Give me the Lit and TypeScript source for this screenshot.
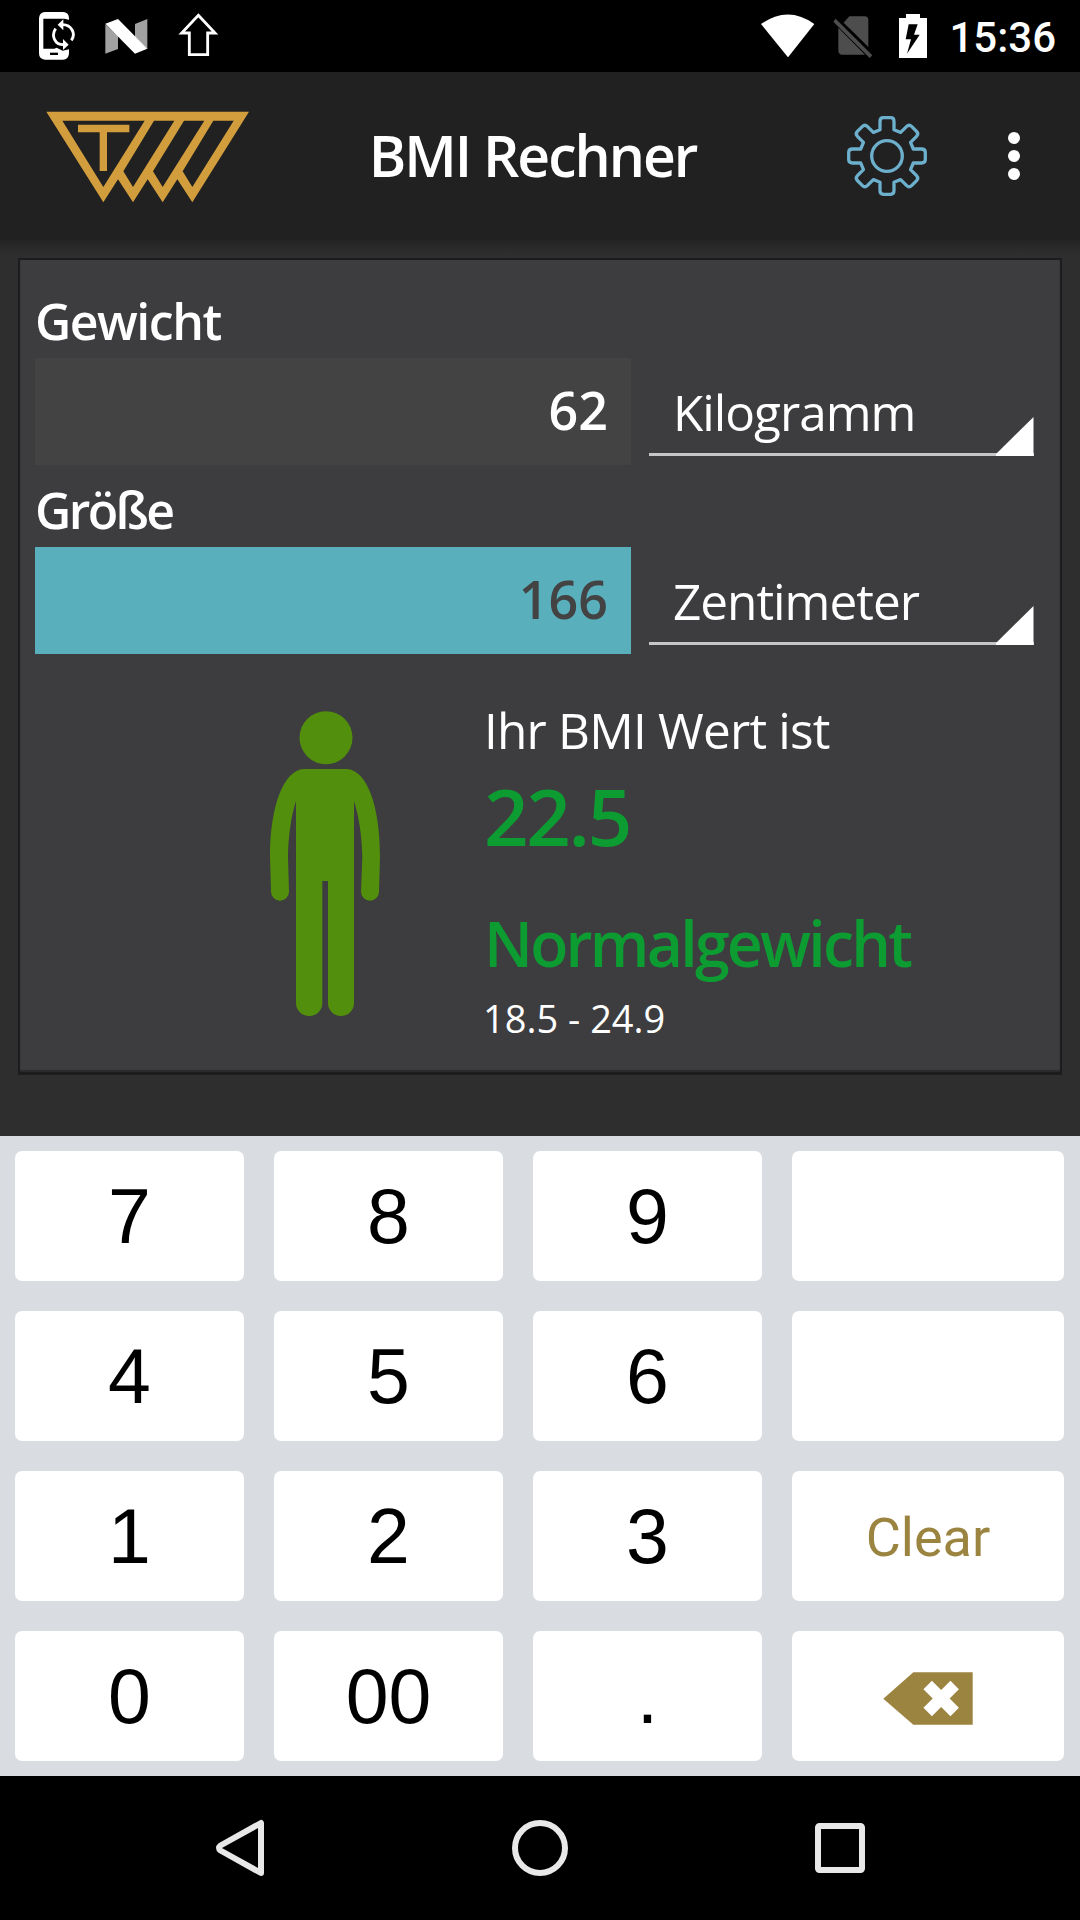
import { LitElement, html, css, svg, nothing } from "lit";
import { customElement, property } from "lit/decorators.js";

/** Outline of a gear with eight rounded teeth, centred on the origin. */
function gearPath(): string {
  const parts: string[] = [];
  for (let i = 0; i < 8; i++) {
    const a = (i * Math.PI) / 4;
    const p = (x: number, y: number) =>
      `${(x * Math.cos(a) - y * Math.sin(a)).toFixed(2)} ${(x * Math.sin(a) + y * Math.cos(a)).toFixed(2)}`;
    parts.push(
      `${i ? "L" : "M"}${p(-7, -26.3)}L${p(-7, -34.5)}Q${p(-7, -38.3)} ${p(-3.6, -38.3)}` +
        `L${p(3.6, -38.3)}Q${p(7, -38.3)} ${p(7, -34.5)}L${p(7, -26.3)}`,
    );
  }
  return parts.join("") + "Z";
}

@customElement("status-bar")
class StatusBar extends LitElement {
  static styles = css`
    :host { display: flex; justify-content: space-between; align-items: flex-start; height: 72px; background: #000; color: #fff; }
    svg { display: block; }
    .group { display: flex; align-items: flex-start; }
    .left { padding-left: 39px; }
    .right { padding-right: 24px; }
    .sync { margin: 12px 30px 0 0; }
    .nougat { margin: 18.5px 30px 0 0; }
    .upload { margin-top: 13px; }
    .wifi { margin: 13.5px 18px 0 0; }
    .sim { margin: 16px 26.5px 0 0; }
    .battery { margin: 14px 22px 0 0; }
    .time { font: 500 42px/72px Roboto, sans-serif; margin-top: 2px; }
  `;
  render() {
    return html`
      <div class="group left">
        <svg class="sync" width="36" height="48" viewBox="117 36 108 144">
          <path fill="#fff" d="M135 36H189Q207 37 207 55V59L193 56H130V146H163L170 143L188 152L207 148V160Q206 179 189 179H135Q117 178 117 160V55Q118 37 135 36Z" />
          <path fill="#000" d="M150 158H174V165H150Z" />
          <path fill="none" stroke="#fff" stroke-width="8.5" d="M188 74C214 74 229 101 214 121M190 134C165 134 152 107 167 86" />
          <path fill="#fff" d="M190 58V91L173 74ZM189 117V150L206 134Z" />
        </svg>
        <svg class="nougat" width="43" height="35" viewBox="314 56 129 105">
          <path fill="#a2a2a2" d="M315 72L353 108V146L315 160ZM404 71L441 56V146L404 110Z" />
          <path fill="#fff" d="M315 70L353 56L441 145L404 160Z" />
        </svg>
        <svg class="upload" width="41" height="44" viewBox="533 39 123 132">
          <path fill="none" stroke="#fff" stroke-width="8.500" d="M594 46L644 99H622V164H567V99H544Z" />
        </svg>
      </div>
      <div class="group right">
        <svg class="wifi" width="53.5" height="43.5" viewBox="122 41 160.5 130.5">
          <path fill="#fff" d="M122 71Q203 14 282 71L203 171Z" />
        </svg>
        <svg class="sim" width="40" height="43" viewBox="337 48 120 129">
          <path fill="#4d4d4d" d="M386 49H432Q443 50 443 60V141L369 68ZM353 83L433 164H365Q353 163 353 152ZM345 56L455 166L447 174L338 65Z" />
        </svg>
        <svg class="battery" width="28" height="44" viewBox="537 42 84 132">
          <path fill="#fff" d="M558 42H600V54H621V174H537V54H558Z" />
          <path fill="#000" d="M566 73H593L582 104H599L561 161L573 118H557Z" />
        </svg>
        <span class="time">15:36</span>
      </div>
    `;
  }
}

@customElement("app-header")
class AppHeader extends LitElement {
  static styles = css`
    :host { display: grid; grid-template-columns: 318px 434px 182px 1fr; height: 168px; background: #212121; align-items: center; color: #fff; }
    svg { display: block; }
    .logo { margin: 1px 0 0 46px; }
    .title { margin: 0 0 2px; text-align: center; font: 600 57px/80px "Open Sans", sans-serif; letter-spacing: -2px; padding-right: 5px; }
    .gear { margin-left: 94px; }
    .more { margin-left: 74px; }
  `;
  render() {
    return html`
      <svg class="logo" width="204" height="92" viewBox="136 332 612 276">
        <path fill="#d29e3d" fill-rule="evenodd" d="M137 334H745L575 606L530 537L486 606L441 537L397 606L352 537L308 606Z
          M185 361H432L308 560Z M460 361H521L397 560L368 513Z M550 361H611L486 560L457 513Z M638 361H699L575 560L546 513Z" />
        <path fill="#d29e3d" d="M232 373H386V396H319V512H297V396H232Z" />
      </svg>
      <h1 class="title">BMI Rechner</h1>
      <svg class="gear" width="84" height="84" viewBox="-41 -42 84 84" fill="none" stroke="#6db0cd" stroke-width="3.300" stroke-linejoin="round">
        <path d=${gearPath()} />
        <circle r="15.3" />
      </svg>
      <svg class="more" width="12" height="48" viewBox="0 0 12 48" fill="#fff">
        ${[6, 24, 42].map((y) => svg`<circle cx="6" cy=${y} r="6" />`)}
      </svg>
    `;
  }
}

@customElement("measure-field")
class MeasureField extends LitElement {
  @property() label = "";
  @property() value = "";
  @property() unit = "";
  @property({ type: Boolean }) active = false;
  static styles = css`
    :host { display: block; font-family: "Open Sans", sans-serif; color: #fff; }
    .label { box-sizing: border-box; height: 75px; padding-top: 1px; font-size: 50px; line-height: 75px; font-weight: 600; letter-spacing: -1.5px; }
    :host([active]) .label { letter-spacing: -2.6px; }
    .row { display: grid; grid-template-columns: 596px 385px; column-gap: 18px; height: 107px; align-items: start; }
    .value { box-sizing: border-box; height: 107px; padding: 0 23px 0 0; text-align: right; background: #434343; font-size: 52px; line-height: 103px; font-weight: 600; }
    .value.active { background: #59afbc; color: #434343; }
    .unit { display: grid; grid-template-columns: 1fr 38px; grid-template-rows: 98px; height: 98px; box-sizing: border-box; background: linear-gradient(#c6c6c6, #c6c6c6) bottom / 100% 3px no-repeat; }
    .name { font-size: 49.5px; line-height: 109px; letter-spacing: -1px; padding-left: 24px; white-space: nowrap; }
    .corner { align-self: end; display: block; }
  `;
  render() {
    return html`
      <div class="label">${this.label}</div>
      <div class="row">
        <div class="value ${this.active ? "active" : ""}">${this.value}</div>
        <div class="unit">
          <span class="name">${this.unit}</span>
          <svg class="corner" width="38" height="39" viewBox="0 0 38 39"><path fill="#fff" d="M37.500 0V39H0V37Z" /></svg>
        </div>
      </div>
    `;
  }
}

@customElement("bmi-result")
class BmiResult extends LitElement {
  static styles = css`
    :host { display: grid; grid-template-columns: 449px 1fr; font-family: "Open Sans", sans-serif; color: #fff; }
    .figure { display: block; margin: 57px 0 0 235px; }
    .text { padding-top: 40.5px; white-space: nowrap; }
    .lead { font-size: 49.5px; line-height: 70px; letter-spacing: -0.8px; }
    .bmi { font-size: 78px; line-height: 102px; font-weight: 600; color: #0d9c32; letter-spacing: -2.3px; }
    .category { margin-top: 34px; font-size: 62.5px; line-height: 84px; font-weight: 600; color: #0d9c32; letter-spacing: -2.75px; }
    .range { font-size: 38px; line-height: 66px; margin-left: -1px; }
  `;
  render() {
    return html`
      <svg class="figure" width="110" height="306" viewBox="90 63 330 918" fill="#528f0c">
        <circle cx="258" cy="143" r="79.5" />
        <path d="M192 237H320C382 240 420 350 420 500L417 605A27 27 0 0 1 363 605L367 500C366 440 357 380 342 333V939A39 39 0 0 1 264 939V573H247V939A39.5 39 0 0 1 168 939V333C153 380 145 440 144 500L147 605A27 27 0 0 1 93 605L90 500C90 350 130 240 192 237Z" />
      </svg>
      <div class="text">
        <div class="lead">Ihr BMI Wert ist</div>
        <div class="bmi">22.5</div>
        <div class="category">Normalgewicht</div>
        <div class="range">18.5 - 24.9</div>
      </div>
    `;
  }
}

@customElement("key-pad")
class KeyPad extends LitElement {
  static styles = css`
    :host { display: grid; box-sizing: border-box; height: 640px; padding: 15px 16px 15px 15px; background: #d9dce1; grid-template-columns: repeat(3, 229px) 1fr; grid-template-rows: repeat(4, 130px); gap: 30px; }
    .key { display: flex; align-items: center; justify-content: center; margin: 0; padding: 0; border: 0; border-radius: 7px; background: #fff; color: #000; font: 400 77px/130px "Liberation Sans", Arial, sans-serif; }
    .clear { font: 400 54px/130px Roboto, sans-serif; color: #9b8340; padding-top: 3px; }
    .erase { display: block; margin-top: 5px; }
  `;
  private keys = ["7", "8", "9", "", "4", "5", "6", "", "1", "2", "3", "Clear", "0", "00", ".", "erase"];
  render() {
    return this.keys.map((k) => {
      if (k === "erase") {
        return html`<button class="key">
          <svg class="erase" width="90" height="53" viewBox="0 0 270 159">
            <path fill="#9b8340" d="M1 80L91 1H269V158H91Z" />
            <path fill="none" stroke="#fff" stroke-width="36" d="M134 39L215 120M215 39L134 120" />
          </svg>
        </button>`;
      }
      return html`<button class="key ${k === "Clear" ? "clear" : ""}">${k || nothing}</button>`;
    });
  }
}

@customElement("nav-bar")
class NavBar extends LitElement {
  static styles = css`
    :host { display: flex; align-items: center; justify-content: space-between; box-sizing: border-box; height: 144px; padding: 0 212px; background: #000; }
    svg { display: block; }
  `;
  render() {
    return html`
      <svg width="56" height="60" viewBox="0 0 56 60" fill="none" stroke="#e8e8e8" stroke-width="6" stroke-linejoin="round">
        <path d="M49 5V55L8.500 32.500Q5.500 30 8.500 27.500Z" />
      </svg>
      <svg width="56" height="60" viewBox="0 0 56 60" fill="none" stroke="#e8e8e8" stroke-width="6">
        <circle cx="28" cy="30" r="25" />
      </svg>
      <svg width="56" height="60" viewBox="0 0 56 60" fill="none" stroke="#e8e8e8" stroke-width="6">
        <rect x="6" y="8" width="44" height="44" rx="1.500" />
      </svg>
    `;
  }
}

@customElement("app-root")
class AppRoot extends LitElement {
  static styles = css`
    :host { display: flex; flex-direction: column; width: 1080px; height: 1920px; overflow: hidden; background: #2e2e2e; }
    .main { flex: 1; box-sizing: border-box; padding: 18px 18px 0; background: linear-gradient(#242424, #2e2e2e 14px); }
    .card { box-sizing: border-box; height: 817px; padding: 23px 15px 0; background: #3d3d3f; border: 2px solid #1c1c1e; border-bottom-width: 3px; box-shadow: inset 0 -2px 1px #2a2a2c; }
    .second { margin-top: 7px; }
  `;
  render() {
    return html`
      <status-bar></status-bar>
      <app-header></app-header>
      <main class="main">
        <section class="card">
          <measure-field label="Gewicht" value="62" unit="Kilogramm"></measure-field>
          <measure-field class="second" label="Größe" value="166" unit="Zentimeter" active></measure-field>
          <bmi-result></bmi-result>
        </section>
      </main>
      <key-pad></key-pad>
      <nav-bar></nav-bar>
    `;
  }
}
